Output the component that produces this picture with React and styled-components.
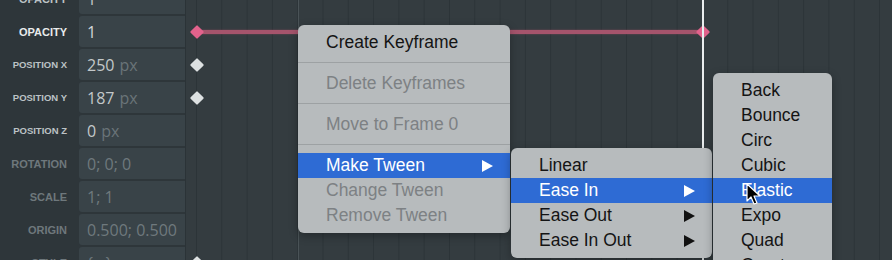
import React from 'react'
import styled, { createGlobalStyle } from 'styled-components'

const FRAME_W = 25.3
const FRAME_0 = 11

const properties = [
  { label: 'OPACITY', value: '1', tone: 'mid' },
  { label: 'OPACITY', value: '1', tone: 'active' },
  { label: 'POSITION X', value: '250', unit: 'px', tone: 'mid', size: 9.5, keys: [0] },
  { label: 'POSITION Y', value: '187', unit: 'px', tone: 'mid', size: 9.5, keys: [0] },
  { label: 'POSITION Z', value: '0', unit: 'px', tone: 'mid', size: 9.5 },
  { label: 'ROTATION', value: '0; 0; 0', tone: 'dim' },
  { label: 'SCALE', value: '1; 1', tone: 'dim' },
  { label: 'ORIGIN', value: '0.500; 0.500', tone: 'dim' },
  { label: 'STYLE', value: '{...}', tone: 'dim', keys: [0] },
]

const labelColors = { active: '#e8ebec', mid: '#bcc2c5', dim: '#6e787c' }
const valueColors = { active: '#d3d7d9', mid: '#c3c8ca', dim: '#6f797d' }

const GlobalStyle = createGlobalStyle`
  html, body {
    margin: 0;
    padding: 0;
    background: #343c40;
    overflow: hidden;
  }
`

const Editor = styled.div`
  position: relative;
  display: flex;
  width: 892px;
  height: 260px;
  overflow: hidden;
  font-family: "Liberation Sans", Arial, sans-serif;
`

const Sidebar = styled.div`
  width: 185px;
  flex: none;
  display: flex;
  flex-direction: column;
  gap: 2px;
  margin-top: -17px;
  background: #2e363a;
`

const PropRow = styled.div`
  display: flex;
  align-items: center;
  height: 31px;
`

const Label = styled.div`
  width: 67px;
  padding-right: 12px;
  text-align: right;
  font-weight: 700;
  font-size: ${p => p.$size || 11}px;
  color: ${p => labelColors[p.$tone]};
  white-space: nowrap;
`

const ValueBox = styled.div`
  flex: 1;
  height: 31px;
  display: flex;
  align-items: center;
  padding-left: 8px;
  background: #394348;
  border-radius: 3px 0 0 3px;
  font-family: "Open Sans", "Liberation Sans", sans-serif;
  font-size: 16px;
  color: ${p => valueColors[p.$tone]};
`

const Unit = styled.span`
  margin-left: 5px;
  color: #6a7478;
`

const Timeline = styled.div`
  position: relative;
  flex: 1;
  border-left: 1px solid #2b3337;
  background-color: #343c40;
  background-image: linear-gradient(to right, #2c3438 1px, transparent 1px);
  background-size: ${FRAME_W}px 100%;
  background-position: ${FRAME_0 - 1}px 0;
`

const Tracks = styled.div`
  display: flex;
  flex-direction: column;
  gap: 2px;
  margin-top: -17px;
`

const Track = styled.div`
  position: relative;
  height: 31px;
`

const Tween = styled.div`
  position: absolute;
  top: 14px;
  height: 4px;
  background: #a5546c;
  box-shadow: 0 0 2px rgba(200, 90, 120, 0.5);
`

const Key = styled.div`
  position: absolute;
  top: 50%;
  width: 10px;
  height: 10px;
  border-radius: 1px;
  background: ${p => (p.$pink ? '#e2628c' : '#dde1e2')};
  transform: translate(-50%, -50%) rotate(45deg);
`

const GuideLine = styled.div`
  position: absolute;
  top: 0;
  bottom: 0;
  width: 1px;
  background: #4a5357;
`

const Playhead = styled.div`
  position: absolute;
  top: 0;
  bottom: 0;
  width: 2px;
  background: #e9edee;
`

const Menu = styled.div`
  position: absolute;
  top: ${p => p.$top}px;
  left: ${p => p.$left};
  width: ${p => p.$width}px;
  padding: 5px 0;
  background: #b7bbbd;
  border-radius: 6px;
  box-shadow: 0 3px 10px rgba(0, 0, 0, 0.3);
  font-size: 17.5px;
  z-index: ${p => p.$z || 2};
`

const Item = styled.div`
  position: relative;
  display: flex;
  align-items: center;
  justify-content: space-between;
  height: 25px;
  padding: 0 17px 0 28px;
  color: ${p => (p.$active ? '#ffffff' : p.$disabled ? '#7d8184' : '#141414')};
  background: ${p => (p.$active ? '#2e6bd4' : 'transparent')};
  white-space: nowrap;
`

const Arrow = styled.span`
  width: 0;
  height: 0;
  border-top: 6px solid transparent;
  border-bottom: 6px solid transparent;
  border-left: 11px solid ${p => (p.$active ? '#ffffff' : '#111111')};
`

const Separator = styled.div`
  height: 1px;
  margin: 7px 0 8px;
  background: #9da1a3;
`

const Cursor = styled.svg`
  position: absolute;
  left: 746px;
  top: 183px;
  z-index: 5;
`

const submenu3 = ['Back', 'Bounce', 'Circ', 'Cubic', 'Elastic', 'Expo', 'Quad', 'Quart']

const App = () => {
  const x = f => FRAME_0 + f * FRAME_W
  return (
    <>
      <GlobalStyle />
      <Editor>
        <Sidebar>
          {properties.map((p, i) => (
            <PropRow key={i}>
              <Label $tone={p.tone} $size={p.size}>{p.label}</Label>
              <ValueBox $tone={p.tone}>
                {p.value}
                {p.unit && <Unit>{p.unit}</Unit>}
              </ValueBox>
            </PropRow>
          ))}
        </Sidebar>

        <Timeline>
          <GuideLine style={{ left: x(4) }} />
          <Tracks>
            {properties.map((p, i) => (
              <Track key={i}>
                {p.tone === 'active' && (
                  <>
                    <Tween style={{ left: x(0), width: x(20) - x(0) }} />
                    <Key $pink style={{ left: x(0) }} />
                    <Key $pink style={{ left: x(20) }} />
                  </>
                )}
                {p.keys && p.keys.map(k => <Key key={k} style={{ left: x(k) }} />)}
              </Track>
            ))}
          </Tracks>
          <Playhead style={{ left: x(20) - 1 }} />
        </Timeline>

        <Menu $top={25} $left="298px" $width={212}>
          <Item>Create Keyframe</Item>
          <Separator />
          <Item $disabled>Delete Keyframes</Item>
          <Separator />
          <Item $disabled>Move to Frame 0</Item>
          <Separator />
          <Item $active>
            Make Tween
            <Arrow $active />
            <Menu $top={-5} $left="calc(100% + 1px)" $width={201}>
              <Item>Linear</Item>
              <Item $active>
                Ease In
                <Arrow $active />
                <Menu $top={-105} $left="calc(100% + 1px)" $width={119} $z={3}>
                  {submenu3.map(s => (
                    <Item key={s} $active={s === 'Elastic'}>{s}</Item>
                  ))}
                </Menu>
              </Item>
              <Item>
                Ease Out
                <Arrow />
              </Item>
              <Item>
                Ease In Out
                <Arrow />
              </Item>
            </Menu>
          </Item>
          <Item $disabled>Change Tween</Item>
          <Item $disabled>Remove Tween</Item>
        </Menu>

        <Cursor width="16" height="24" viewBox="0 0 16 24">
          <path d="M1 1 L1 18 L5 14 L8 21 L11 20 L8 13 L14 13 Z" fill="#000" stroke="#fff" strokeWidth="1.2" strokeLinejoin="round" />
        </Cursor>
      </Editor>
    </>
  )
}

export default App
